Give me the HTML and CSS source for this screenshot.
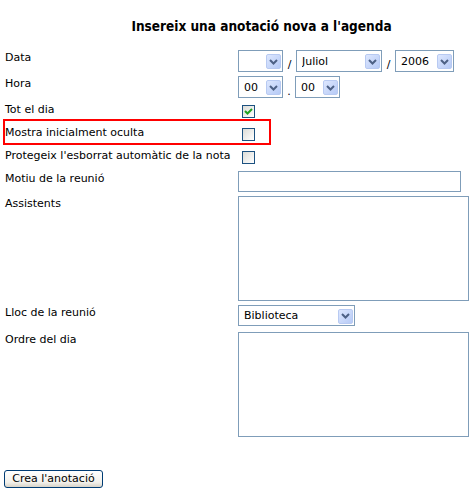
FILE: index.html
```html
<!DOCTYPE html>
<html lang="ca">
<head>
  <meta charset="UTF-8">
  <title>Insereix una anotació</title>
  <link rel="stylesheet" href="styles.css">
</head>
<body>
  <h1 class="title">Insereix una anotació nova a l'agenda</h1>

  <form class="entry">
    <div class="row">
      <label class="label">Data</label>
      <div class="field">
        <span class="pick w-day">
          <select><option></option></select>
          <span class="drop"><svg viewBox="0 0 9 6"><path d="M1 1 L4.5 4.5 L8 1"/></svg></span>
        </span>
        <span class="sep">/</span>
        <span class="pick w-month">
          <select><option>Juliol</option></select>
          <span class="drop"><svg viewBox="0 0 9 6"><path d="M1 1 L4.5 4.5 L8 1"/></svg></span>
        </span>
        <span class="sep">/</span>
        <span class="pick w-year">
          <select><option>2006</option></select>
          <span class="drop"><svg viewBox="0 0 9 6"><path d="M1 1 L4.5 4.5 L8 1"/></svg></span>
        </span>
      </div>
    </div>

    <div class="row">
      <label class="label">Hora</label>
      <div class="field">
        <span class="pick w-time">
          <select><option>00</option></select>
          <span class="drop"><svg viewBox="0 0 9 6"><path d="M1 1 L4.5 4.5 L8 1"/></svg></span>
        </span>
        <span class="sep dot">.</span>
        <span class="pick w-time">
          <select><option>00</option></select>
          <span class="drop"><svg viewBox="0 0 9 6"><path d="M1 1 L4.5 4.5 L8 1"/></svg></span>
        </span>
      </div>
    </div>

    <div class="row">
      <label class="label">Tot el dia</label>
      <div class="field">
        <span class="box">
          <input type="checkbox" checked>
          <svg class="tick" viewBox="0 0 13 13"><path d="M3 6 L5.5 8.5 L10 4"/></svg>
        </span>
      </div>
    </div>

    <div class="row marked">
      <label class="label">Mostra inicialment oculta</label>
      <div class="field">
        <span class="box"><input type="checkbox"></span>
      </div>
    </div>

    <div class="row">
      <label class="label">Protegeix l'esborrat automàtic de la nota</label>
      <div class="field">
        <span class="box"><input type="checkbox"></span>
      </div>
    </div>

    <div class="row">
      <label class="label">Motiu de la reunió</label>
      <div class="field">
        <input class="text" type="text">
      </div>
    </div>

    <div class="row">
      <label class="label">Assistents</label>
      <div class="field">
        <textarea class="area"></textarea>
      </div>
    </div>

    <div class="row place">
      <label class="label">Lloc de la reunió</label>
      <div class="field">
        <span class="pick w-place">
          <select><option>Biblioteca</option></select>
          <span class="drop"><svg viewBox="0 0 9 6"><path d="M1 1 L4.5 4.5 L8 1"/></svg></span>
        </span>
      </div>
    </div>

    <div class="row">
      <label class="label">Ordre del dia</label>
      <div class="field">
        <textarea class="area"></textarea>
      </div>
    </div>

    <div class="actions">
      <button type="button" class="submit">Crea l'anotació</button>
    </div>
  </form>
</body>
</html>
```

FILE: styles.css
```css
body {
  margin: 0;
  font-family: "DejaVu Sans", Verdana, sans-serif;
  font-size: 11px;
  color: #000;
  background: #fff;
}
.title {
  margin: 18px 0 0 0;
  padding-left: 52px;
  text-align: center;
  font-size: 13.5px;
  font-stretch: condensed;
  font-weight: bold;
  line-height: 17px;
}
.entry {
  margin-top: 15px;
  padding-left: 5px;
  display: flex;
  flex-direction: column;
  gap: 4px;
}
.row {
  display: flex;
  align-items: flex-start;
  position: relative;
}
.label {
  width: 233px;
  flex-shrink: 0;
  padding-top: 1px;
  line-height: 14px;
}
.field {
  display: flex;
  align-items: flex-end;
}
.marked::after {
  content: "";
  position: absolute;
  left: -2px;
  top: -6px;
  width: 268px;
  height: 26px;
  box-sizing: border-box;
  border: 2px solid #ff0000;
  pointer-events: none;
}
.place {
  padding-bottom: 2px;
}

/* dropdowns */
.pick {
  position: relative;
  display: inline-block;
  height: 22px;
}
.pick select {
  -webkit-appearance: none;
  appearance: none;
  width: 100%;
  height: 100%;
  margin: 0;
  padding: 0 0 0 5px;
  border: 1px solid #7f9db9;
  border-radius: 0;
  background: #fff;
  font: inherit;
  color: #000;
}
.pick .drop {
  position: absolute;
  right: 2px;
  top: 50%;
  margin-top: -7px;
  width: 15px;
  height: 15px;
  box-sizing: border-box;
  border: 1px solid #b8caf2;
  border-radius: 2px;
  background: linear-gradient(135deg, #dde7fe, #b6caf6);
  display: flex;
  align-items: center;
  justify-content: center;
  pointer-events: none;
}
.drop svg {
  width: 9px;
  height: 6px;
}
.drop path {
  fill: none;
  stroke: #4d6185;
  stroke-width: 2;
}
.w-day { width: 45px; }
.w-month { width: 86px; }
.w-year { width: 59px; }
.w-time { width: 45px; }
.w-place { width: 117px; height: 21px; }
.sep {
  width: 13px;
  text-align: center;
  line-height: 12px;
  margin-bottom: 1px;
}
.sep.dot {
  width: 12px;
  margin-bottom: 0;
}

/* checkboxes */
.box {
  position: relative;
  display: inline-block;
  width: 13px;
  height: 13px;
  margin: 3px 4px;
}
.box input {
  -webkit-appearance: none;
  appearance: none;
  display: block;
  margin: 0;
  width: 13px;
  height: 13px;
  box-sizing: border-box;
  border: 1px solid #1c5180;
  background: linear-gradient(135deg, #dcdcd7, #ffffff);
}
.tick {
  position: absolute;
  left: 0;
  top: 0;
  width: 13px;
  height: 13px;
  pointer-events: none;
}
.tick path {
  fill: none;
  stroke: #21a121;
  stroke-width: 2;
}

/* text inputs */
.text {
  width: 223px;
  height: 21px;
  box-sizing: border-box;
  margin: 0;
  border: 1px solid #7f9db9;
  font: inherit;
}
.area {
  display: block;
  width: 231px;
  height: 105px;
  box-sizing: border-box;
  margin: 0;
  border: 1px solid #7f9db9;
  resize: none;
  font: inherit;
}

.actions {
  margin-top: 29px;
  margin-left: -1px;
}
.submit {
  width: 99px;
  height: 18px;
  padding: 0;
  border: 1px solid #003c74;
  border-radius: 3px;
  background: linear-gradient(#ffffff, #f2f1ec 70%, #d8d3c8);
  font-family: inherit;
  font-size: 11px;
  line-height: 14px;
  white-space: nowrap;
  text-align: center;
  color: #000;
}
```
